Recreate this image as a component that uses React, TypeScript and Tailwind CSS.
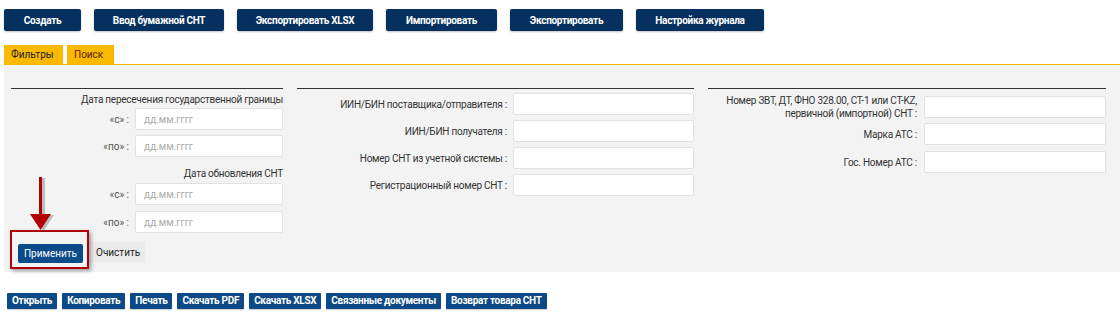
const topButtons = [
  { label: "Создать", w: "w-[77px]" },
  { label: "Ввод бумажной СНТ", w: "w-[130px]" },
  { label: "Экспортировать XLSX", w: "w-[136px]" },
  { label: "Импортировать", w: "w-[111px]" },
  { label: "Экспортировать", w: "w-[113px]" },
  { label: "Настройка журнала", w: "w-[128px]" },
];

const bottomButtons = [
  "Открыть",
  "Копировать",
  "Печать",
  "Скачать PDF",
  "Скачать XLSX",
  "Связанные документы",
  "Возврат товара СНТ",
];

const DateRow = ({ label }: { label: string }) => (
  <div className="flex items-center justify-end gap-[6px]">
    <span className="text-[10px] text-[#555]">{label}</span>
    <div className="w-[148px] h-[22px] bg-white border border-[#e2e2e2] rounded-[2px] flex items-center pl-[8px] text-[10px] text-[#aaa]">
      дд.мм.гггг
    </div>
  </div>
);

const FieldRow = ({ label, w, className = "" }: { label: string; w: string; className?: string }) => (
  <div className={"flex items-center justify-end gap-[6px] " + className}>
    <span className="text-[10px] tracking-[-0.25px] text-[#333] text-right whitespace-nowrap">{label}</span>
    <div className={w + " h-[22px] bg-white border border-[#e2e2e2] rounded-[2px] shrink-0"} />
  </div>
);

export default function App() {
  return (
    <div className="w-[1120px] h-[316px] bg-white font-['Roboto',sans-serif] overflow-hidden">
      {/* Toolbar */}
      <div className="flex gap-[13px] pl-[4px] pt-[9px]">
        {topButtons.map((b) => (
          <button
            key={b.label}
            className={b.w + " h-[22px] bg-[#06305f] text-white text-[10px] tracking-[-0.3px] font-bold rounded-[2px] shadow-[0_1px_2px_rgba(0,0,0,0.25)]"}
          >
            {b.label}
          </button>
        ))}
      </div>

      {/* Tabs */}
      <div className="mt-[14px] ml-[4px] flex gap-[4px] items-end border-b border-[#fbb900]">
        <div className="w-[59px] h-[19px] bg-[#fbb900] text-[10px] text-[#222] pl-[7px] flex items-center">Фильтры</div>
        <div className="w-[47px] h-[19px] bg-[#fbb900] text-[10px] text-[#5a2000] pl-[7px] flex items-center">Поиск</div>
      </div>

      {/* Filter panel */}
      <div className="ml-[4px] h-[207px] bg-[#f3f3f3] pl-[7px] pr-[13px] pt-[23px] flex gap-[14px]">
        {/* Column 1 */}
        <div className="w-[272px] border-t border-[#333] flex flex-col">
          <div className="mt-[4px] h-[14px] text-right text-[10px] tracking-[-0.25px] text-[#333] leading-[14px]">
            Дата пересечения государственной границы
          </div>
          <div className="mt-[1px] flex flex-col gap-[5px]">
            <DateRow label="«с» :" />
            <DateRow label="«по» :" />
          </div>
          <div className="mt-[10px] h-[14px] text-right text-[10px] tracking-[-0.25px] text-[#333] leading-[14px]">
            Дата обновления СНТ
          </div>
          <div className="mt-[2px] flex flex-col gap-[6px]">
            <DateRow label="«с» :" />
            <DateRow label="«по» :" />
          </div>
          <div className="mt-[7px] ml-[7px] flex items-center">
            <div className="relative">
              <button className="w-[65px] h-[19px] bg-[#0c4b8a] text-white text-[10px] rounded-[2px]">Применить</button>
              <div className="absolute left-[-8px] top-[-10px] w-[79px] h-[39px] border-2 border-[#b0000b] shadow-[2px_2px_4px_rgba(0,0,0,0.35)]" />
              <svg className="absolute left-[12px] top-[-63px]" width="26" height="56" viewBox="0 0 26 56">
                <g fill="#999" opacity="0.6" transform="translate(3,1)">
                  <rect x="9" y="0" width="3" height="40" />
                  <polygon points="0,37 21,37 10.5,53" />
                </g>
                <rect x="9" y="0" width="3" height="40" fill="#b40000" />
                <polygon points="0,37 21,37 10.5,53" fill="#b40000" />
              </svg>
            </div>
            <button className="ml-[6px] w-[56px] h-[20px] bg-[#ebebeb] text-[#222] text-[10px] text-left pl-[7px]">Очистить</button>
          </div>
        </div>

        {/* Column 2 */}
        <div className="w-[397px] border-t border-[#333] pt-[4px] flex flex-col gap-[5px]">
          <FieldRow label="ИИН/БИН поставщика/отправителя :" w="w-[181px]" />
          <FieldRow label="ИИН/БИН получателя :" w="w-[181px]" />
          <FieldRow label="Номер СНТ из учетной системы :" w="w-[181px]" />
          <FieldRow label="Регистрационный номер СНТ :" w="w-[181px]" />
        </div>

        {/* Column 3 */}
        <div className="w-[398px] border-t border-[#333] pt-[5px] flex flex-col">
          <div className="flex items-start justify-end gap-[7px]">
            <span className="text-[10px] tracking-[-0.25px] text-[#333] text-right leading-[13px] whitespace-nowrap">
              Номер ЗВТ, ДТ, ФНО 328.00, СТ-1 или CT-KZ,
              <br />
              первичной (импортной) СНТ :
            </span>
            <div className="w-[182px] h-[22px] mt-[2px] bg-white border border-[#e2e2e2] rounded-[2px] shrink-0" />
          </div>
          <FieldRow label="Марка АТС :" w="w-[182px]" className="mt-[3px] gap-[7px]" />
          <FieldRow label="Гос. Номер АТС :" w="w-[182px]" className="mt-[6px] gap-[7px]" />
        </div>
      </div>

      {/* Bottom actions */}
      <div className="mt-[21px] ml-[7px] flex gap-[5px]">
        {bottomButtons.map((b) => (
          <button
            key={b}
            className="h-[16px] px-[5px] bg-[#0c4a87] text-white text-[10px] tracking-[-0.3px] font-bold rounded-[1px] leading-[16px] shadow-[0_1px_1px_rgba(0,0,0,0.2)]"
          >
            {b}
          </button>
        ))}
      </div>
    </div>
  );
}
